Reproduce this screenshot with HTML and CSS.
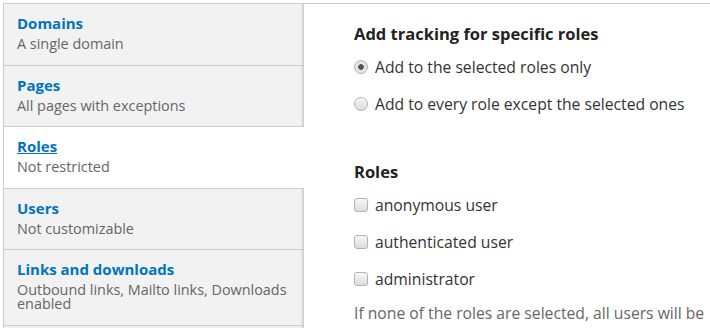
FILE: index.html
```html
<!DOCTYPE html>
<html lang="en">
<head>
    <meta charset="UTF-8">
    <title>Tracking scope</title>
    <link rel="stylesheet" href="styles.css">
</head>
<body>
    <div class="vertical-tabs">
        <ul class="tabs-menu">
            <li class="tab-item">
                <a href="#" class="tab-link">
                    <strong class="tab-title">Domains</strong>
                    <span class="tab-summary">A single domain</span>
                </a>
            </li>
            <li class="tab-item">
                <a href="#" class="tab-link">
                    <strong class="tab-title">Pages</strong>
                    <span class="tab-summary">All pages with exceptions</span>
                </a>
            </li>
            <li class="tab-item selected">
                <a href="#" class="tab-link">
                    <strong class="tab-title">Roles</strong>
                    <span class="tab-summary">Not restricted</span>
                </a>
            </li>
            <li class="tab-item">
                <a href="#" class="tab-link">
                    <strong class="tab-title">Users</strong>
                    <span class="tab-summary">Not customizable</span>
                </a>
            </li>
            <li class="tab-item">
                <a href="#" class="tab-link">
                    <strong class="tab-title">Links and downloads</strong>
                    <span class="tab-summary">Outbound links, Mailto links, Downloads enabled</span>
                </a>
            </li>
        </ul>

        <div class="tab-pane">
            <fieldset class="form-group">
                <legend>Add tracking for specific roles</legend>
                <label class="form-option">
                    <input type="radio" name="visibility" checked>
                    <span>Add to the selected roles only</span>
                </label>
                <label class="form-option">
                    <input type="radio" name="visibility">
                    <span>Add to every role except the selected ones</span>
                </label>
            </fieldset>

            <fieldset class="form-group roles">
                <legend>Roles</legend>
                <label class="form-option">
                    <input type="checkbox">
                    <span>anonymous user</span>
                </label>
                <label class="form-option">
                    <input type="checkbox">
                    <span>authenticated user</span>
                </label>
                <label class="form-option">
                    <input type="checkbox">
                    <span>administrator</span>
                </label>
                <p class="description">If none of the roles are selected, all users will be tracked.</p>
            </fieldset>
        </div>
    </div>
</body>
</html>
```

FILE: styles.css
```css
* {
    margin: 0;
    padding: 0;
    box-sizing: border-box;
}

body {
    font-family: "Open Sans", sans-serif;
    font-size: 15px;
    color: #333;
    background: #fff;
    padding: 3px 0 0 3px;
    overflow: hidden;
}

.vertical-tabs {
    display: flex;
    border-top: 1px solid #ccc;
    border-left: 1px solid #ccc;
    width: 900px;
    height: 340px;
}

.tabs-menu {
    list-style: none;
    width: 300px;
    flex-shrink: 0;
    background: #f2f2f2;
    border-right: 1px solid #ccc;
    box-shadow: inset -2px 0 0 #e4e4e4;
}

.tab-item {
    border-bottom: 1px solid #ccc;
    background: #f2f2f2;
    box-shadow: inset -2px 0 0 #e4e4e4;
}

.tab-item.selected {
    background: #fff;
    box-shadow: none;
    margin-right: -1px;
}

.tab-link {
    display: block;
    padding: 10px 13px 13.5px;
    text-decoration: none;
    line-height: 14px;
}

.tab-title {
    display: block;
    color: #0074bd;
    font-size: 15px;
    font-weight: 700;
    line-height: 18px;
}

.selected .tab-title {
    text-decoration: underline;
}

.tab-summary {
    display: block;
    color: #666;
    font-size: 14.4px;
    margin-top: 5px;
}

.tab-pane {
    flex: 1;
    min-width: 0;
    padding: 20px 0 0 50px;
}

.form-group {
    border: none;
}

.form-group legend {
    font-size: 16.5px;
    font-weight: 700;
    color: #222;
    line-height: 20px;
    margin-bottom: 4px;
}

.form-group.roles {
    margin-top: 40px;
}

.form-option {
    display: flex;
    align-items: center;
    gap: 7px;
    height: 37px;
    font-size: 15.7px;
    color: #333;
}

.form-option input {
    appearance: none;
    width: 14px;
    height: 14px;
    border: 1px solid #b3b3b3;
    background: linear-gradient(#f7f7f7, #dcdcdc);
    flex-shrink: 0;
}

.form-option input[type="radio"] {
    border-radius: 50%;
}

.form-option input[type="radio"]:checked {
    background: radial-gradient(circle, #555 0, #555 2.5px, #e8e8e8 3.2px, #dedede 100%);
}

.form-option input[type="checkbox"] {
    border-radius: 3px;
}

.description {
    color: #666;
    font-size: 15.7px;
    line-height: 26px;
    margin-top: 3px;
    max-width: 360px;
}
```
